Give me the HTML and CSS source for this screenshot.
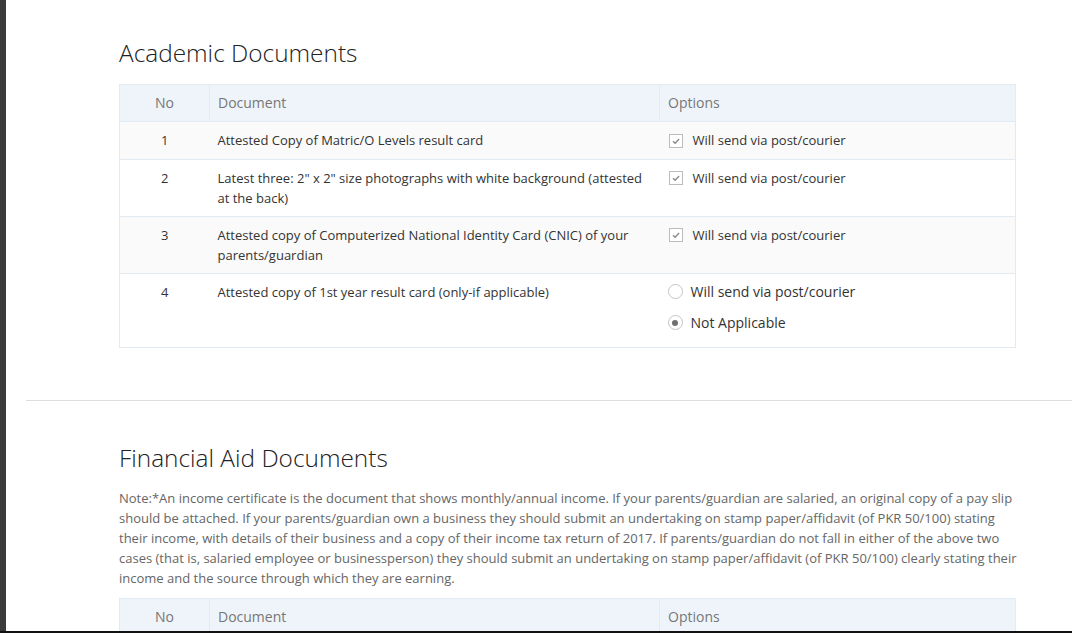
FILE: index.html
```html
<!DOCTYPE html>
<html lang="en">
<head>
<meta charset="utf-8">
<title>Documents</title>
<link rel="stylesheet" href="styles.css">
</head>
<body>
<div class="window">
  <aside class="sidebar"></aside>
  <main class="content">
    <section class="doc-section first">
      <h2 class="section-title">Academic Documents</h2>
      <table class="doc-table">
        <colgroup><col class="c-no"><col class="c-doc"><col class="c-opt"></colgroup>
        <thead>
          <tr><th class="num">No</th><th>Document</th><th>Options</th></tr>
        </thead>
        <tbody>
          <tr class="odd">
            <td class="num">1</td>
            <td>Attested Copy of Matric/O Levels result card</td>
            <td><label class="check"><span class="box"><svg viewBox="0 0 14 14" width="14" height="14"><path d="M3.5 7.2 L6 9.6 L10.6 4.6" fill="none" stroke="#8a8a8a" stroke-width="1.6"/></svg></span>Will send via post/courier</label></td>
          </tr>
          <tr class="tall">
            <td class="num">2</td>
            <td>Latest three: 2" x 2" size photographs with white background (attested at the back)</td>
            <td><label class="check"><span class="box"><svg viewBox="0 0 14 14" width="14" height="14"><path d="M3.5 7.2 L6 9.6 L10.6 4.6" fill="none" stroke="#8a8a8a" stroke-width="1.6"/></svg></span>Will send via post/courier</label></td>
          </tr>
          <tr class="odd tall">
            <td class="num">3</td>
            <td>Attested copy of Computerized National Identity Card (CNIC) of your parents/guardian</td>
            <td><label class="check"><span class="box"><svg viewBox="0 0 14 14" width="14" height="14"><path d="M3.5 7.2 L6 9.6 L10.6 4.6" fill="none" stroke="#8a8a8a" stroke-width="1.6"/></svg></span>Will send via post/courier</label></td>
          </tr>
          <tr>
            <td class="num">4</td>
            <td>Attested copy of 1st year result card (only-if applicable)</td>
            <td>
              <div class="radio-list">
                <label class="radio"><span class="dot"></span>Will send via post/courier</label>
                <label class="radio"><span class="dot on"></span>Not Applicable</label>
              </div>
            </td>
          </tr>
        </tbody>
      </table>
    </section>
    <hr class="divider">
    <section class="doc-section">
      <h2 class="section-title">Financial Aid Documents</h2>
      <p class="note">Note:*An income certificate is the document that shows monthly/annual income. If your parents/guardian are salaried, an original copy of a pay slip should be attached. If your parents/guardian own a business they should submit an undertaking on stamp paper/affidavit (of PKR 50/100) stating their income, with details of their business and a copy of their income tax return of 2017. If parents/guardian do not fall in either of the above two cases (that is, salaried employee or businessperson) they should submit an undertaking on stamp paper/affidavit (of PKR 50/100) clearly stating their income and the source through which they are earning.</p>
      <table class="doc-table">
        <colgroup><col class="c-no"><col class="c-doc"><col class="c-opt"></colgroup>
        <thead>
          <tr><th class="num">No</th><th>Document</th><th>Options</th></tr>
        </thead>
      </table>
    </section>
  </main>
</div>
</body>
</html>
```
FILE: styles.css
```css
html, body {
  margin: 0;
  padding: 0;
  background: #fff;
}
body {
  font-family: "Open Sans", "Noto Sans", sans-serif;
  color: #333;
  overflow: hidden;
}
.window {
  display: flex;
  height: 631px;
  overflow: hidden;
  border-bottom: 2px solid #111;
}
.sidebar {
  flex: 0 0 6px;
  background: #3b3b3b;
}
.content {
  flex: 1;
  padding-left: 20px;
  min-width: 0;
}
.doc-section {
  padding: 0 56px 0 93px;
}
.section-title {
  margin: 0 0 17px;
  font-size: 24.4px;
  line-height: 30px;
  font-weight: 300;
  color: #222;
}
.doc-section.first .section-title {
  margin-top: 38px;
  margin-bottom: 16px;
}
.doc-section:not(.first) .section-title {
  margin-top: 42px;
  margin-bottom: 15px;
}
.divider {
  margin: 52px 0 0;
  border: 0;
  border-top: 1px solid #dedede;
  height: 0;
}
.doc-table {
  width: 100%;
  border-collapse: collapse;
  border: 1px solid #e3ebf2;
  font-size: 13px;
  line-height: 19px;
}
.c-no { width: 90px; }
.c-doc { width: 450px; }
.doc-table th {
  background: #eef4f9;
  color: #777;
  font-weight: 400;
  font-size: 14px;
  text-align: left;
  padding: 8px 8px;
  line-height: 20px;
  border-left: 1px solid #e3ebf2;
  border-bottom: 1px solid #e3ebf2;
}
.doc-table td {
  padding: 9px 8px;
  vertical-align: top;
  border-top: 1px solid #e3ebf2;
  color: #333;
}
.doc-table tr.tall td {
  line-height: 20px;
  padding-top: 8px;
  padding-bottom: 8px;
}
.doc-table .num {
  text-align: center;
}
.doc-table tr.odd td {
  background: #fafafa;
}
.check {
  display: flex;
  align-items: center;
  gap: 10px;
  padding-left: 1px;
}
.box {
  width: 12px;
  height: 12px;
  border: 1px solid #bcbcbc;
  background: #fff;
  display: flex;
  align-items: center;
  justify-content: center;
  flex: 0 0 auto;
}
.box svg {
  display: block;
}
.radio-list {
  display: flex;
  flex-direction: column;
  gap: 12px;
  margin-top: -1px;
  padding-bottom: 6px;
  font-size: 14px;
}
.radio {
  display: flex;
  align-items: center;
  gap: 8px;
}
.dot {
  width: 13px;
  height: 13px;
  border: 1px solid #c4c4c4;
  border-radius: 50%;
  background: #fff;
  display: flex;
  align-items: center;
  justify-content: center;
  flex: 0 0 auto;
}
.dot.on::after {
  content: "";
  width: 6px;
  height: 6px;
  border-radius: 50%;
  background: #707070;
}
.note {
  margin: 0 -6px 10px 0;
  font-size: 13px;
  line-height: 20px;
  color: #666;
}
```
